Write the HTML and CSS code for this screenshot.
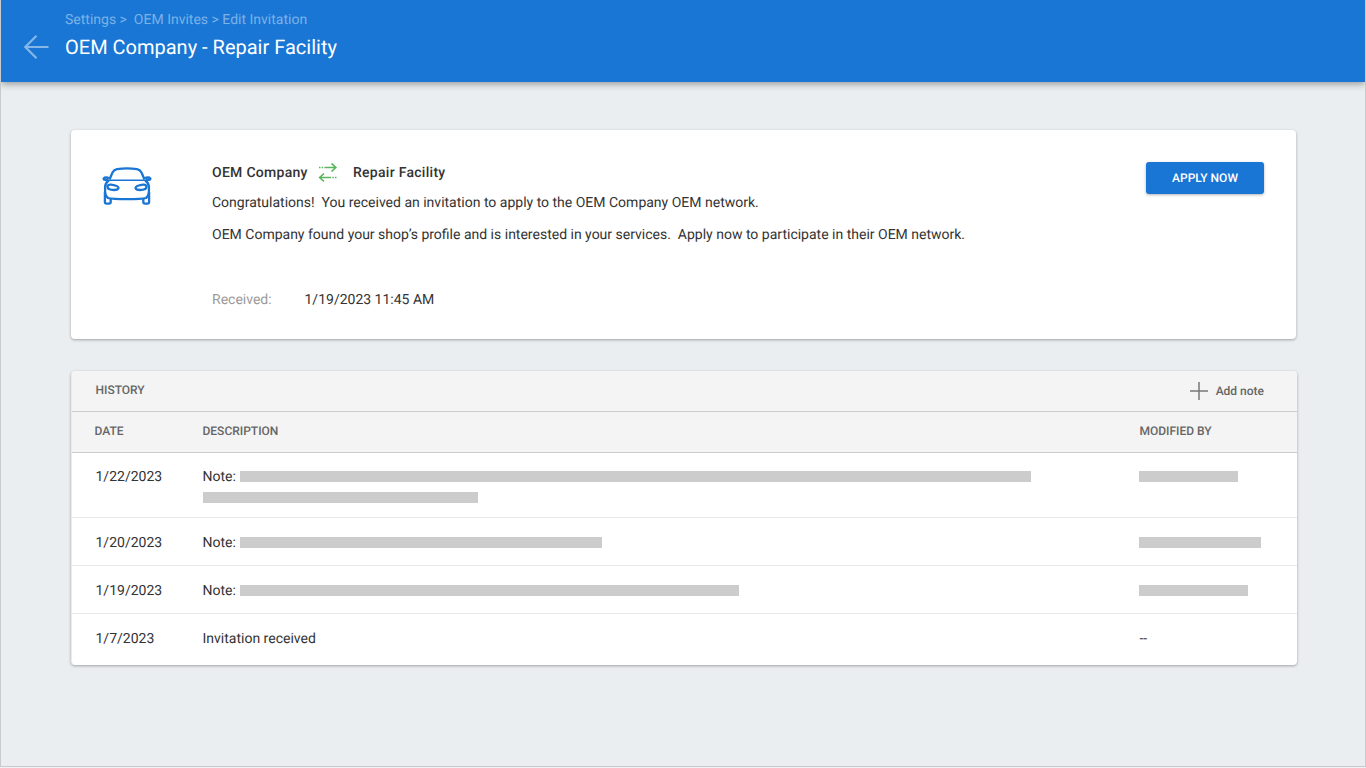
FILE: index.html
```
<!DOCTYPE html>
<html lang="en">
<head>
<meta charset="utf-8">
<title>Edit Invitation</title>
<link rel="stylesheet" href="styles.css">
</head>
<body>
<div class="page">
  <header class="topbar">
    <svg class="back" width="26" height="26" viewBox="0 0 26 26"><path d="M25.500 13H2.500M13.500 1.800L2.300 13L13.500 24.200"/></svg>
    <div class="titles">
      <nav class="crumbs">Settings &gt;&nbsp; OEM Invites &gt; Edit Invitation</nav>
      <h1 class="title">OEM Company - Repair Facility</h1>
    </div>
  </header>
  <main class="content">
    <section class="card invite">
      <svg class="car" width="50" height="40" viewBox="0 0 50 40">
        <path d="M7.500 13.500L10.500 6.500Q12 3.600 15 3.100Q25 1.700 35 3.100Q38 3.600 39.500 6.500L42.500 13.500"/>
        <path class="thin" d="M7 14.300H43"/>
        <path d="M7 14Q3.300 17 3.100 21V26Q3.300 30 6 32Q10 33.200 25 33.200T44 32Q46.700 30 46.900 26V21Q46.700 17 43 14"/>
        <path d="M7 12.300Q5 10.800 2.500 11.700Q1 12.500 2 13.600L6 14M43 12.300Q45 10.800 47.500 11.700Q49 12.500 48 13.600L44 14"/>
        <path d="M2.900 26V36Q2.900 37.600 4.500 37.600H7Q8.700 37.600 8.700 36V33M47.100 26V36Q47.100 37.600 45.500 37.600H43Q41.300 37.600 41.300 36V33"/>
        <path d="M5.500 20.500Q6 18.300 9 18.600Q16.500 19.500 16.500 22Q16 24 12 24Q5.500 24 5.500 20.500ZM44.500 20.500Q44 18.300 41 18.600Q33.500 19.500 33.500 22Q34 24 38 24Q44.500 24 44.500 20.500Z"/>
      </svg>
      <div class="info">
        <div class="parties">
          <span>OEM Company</span>
          <svg class="swap" width="20" height="20" viewBox="0 0 20 20">
            <path d="M6.500 4.500H17.500M13.500 .5L17.800 4.500L13.500 8.500M13 14.500H2M6 10.500L1.700 14.500L6 18.500"/>
            <path d="M1 4.500H2.500M3.700 4.500H5.200M14.300 14.500H15.800M17 14.500H18.500"/>
          </svg>
          <span>Repair Facility</span>
        </div>
        <p class="line first">Congratulations!&nbsp; You received an invitation to apply to the OEM Company OEM network.</p>
        <p class="line second">OEM Company found your shop’s profile and is interested in your services.&nbsp; Apply now to participate in their OEM network.</p>
        <div class="received"><span class="label">Received:</span><span>1/19/2023 11:45 AM</span></div>
      </div>
      <button class="apply">APPLY NOW</button>
    </section>
    <section class="card history">
      <div class="bar">
        <h2 class="heading">HISTORY</h2>
        <button class="add"><svg width="18" height="18" viewBox="0 0 18 18"><path d="M9 0V18M0 9H18"/></svg><span>Add note</span></button>
      </div>
      <div class="row columns"><span class="date">DATE</span><span>DESCRIPTION</span><span class="by">MODIFIED BY</span></div>
      <div class="row tall">
        <span class="date">1/22/2023</span>
        <div><div class="note"><span>Note:</span><i class="mask w791"></i></div><div class="note"><i class="mask w275"></i></div></div>
        <i class="mask w99"></i>
      </div>
      <div class="row"><span class="date">1/20/2023</span><div class="note"><span>Note:</span><i class="mask w362"></i></div><i class="mask w122"></i></div>
      <div class="row"><span class="date">1/19/2023</span><div class="note"><span>Note:</span><i class="mask w499"></i></div><i class="mask w109"></i></div>
      <div class="row last"><span class="date">1/7/2023</span><span>Invitation received</span><span class="by">--</span></div>
    </section>
  </main>
</div>
</body>
</html>
```
FILE: styles.css
```
* { box-sizing: border-box; }
body { margin: 0; background: #f0f1f2; font-family: Roboto, "Liberation Sans", sans-serif; color: #333; overflow: hidden; text-rendering: geometricPrecision; }
h1, h2, p { margin: 0; }
button { font-family: inherit; text-rendering: inherit; padding: 0; border: 0; }
svg { fill: none; flex: none; }
.page { height: 767px; background: #eaeef1; border: 1px solid #c8cacc; border-top: 0; }
.topbar { display: flex; height: 82px; background: #1976d4; padding: 11px 0 0 22px; box-shadow: 0 2px 7px rgba(0,0,0,.36); clip-path: inset(0 0 -20px 0); }
.back { margin-top: 23px; stroke: #85b7e9; stroke-width: 2.200; }
.titles { padding-left: 16px; }
.crumbs { font-size: 14px; line-height: 19px; color: #7cb2e8; white-space: pre; }
.title { font-size: 20px; line-height: 26px; margin-top: 4px; font-weight: 400; color: #fff; }
.content { padding: 48px 69px 0 70px; }
.card { border-radius: 4px; background: #fff; box-shadow: 0 1px 3px rgba(0,0,0,.32); }
.invite { display: flex; height: 209px; width: 1225px; }
.car { margin: 36px 0 0 31px; stroke: #1976d4; stroke-width: 2.300; }
.car .thin { stroke-width: 1.500; }
.info { padding: 33px 0 0 60px; flex: 1; font-size: 14px; line-height: 20px; }
.parties { display: flex; font-weight: 500; letter-spacing: .28px; }
.parties span:first-child { width: 96px; white-space: nowrap; }
.swap { margin: 0 15px 0 10px; stroke: #5cb660; stroke-width: 1.700; }
.line { white-space: nowrap; }
.first { margin-top: 10px; }
.second { margin-top: 12px; }
.received { display: flex; margin-top: 45px; }
.label { width: 92.500px; color: #9b9b9b; }
.apply { width: 118px; height: 32px; margin: 32px 32px 0 0; border-radius: 3px; background: #1976d4; color: #fff; font-size: 12px; font-weight: 500; box-shadow: 0 1px 3px rgba(0,0,0,.3); }
.history { margin-top: 32px; height: 294px; width: 1226px; overflow: hidden; background: #fff; border-left: 1px solid #e9ebed; }
.bar { display: flex; justify-content: space-between; height: 41px; background: #f4f4f4; border-bottom: 1px solid #ccc; padding: 0 33px 0 23.500px; color: #666; }
.heading { font-size: 12px; font-weight: 500; line-height: 38px; }
.add { display: flex; align-items: center; gap: 8px; background: none; color: #666; font-size: 12px; font-weight: 500; height: 40px; }
.add svg { stroke: #777; stroke-width: 1.500; }
.row { display: grid; grid-template-columns: 107px 936.500px 1fr; padding: 15px 0 0 23.500px; height: 48px; border-bottom: 1px solid #e8eaeb; font-size: 14px; line-height: 21px; }
.columns { height: 41px; padding-top: 9px; background: #f4f4f4; border-color: #ccc; color: #666; font-size: 12px; font-weight: 500; }
.columns .date { margin-left: -1px; }
.by { padding-left: .5px; }
.tall { height: 65px; padding-top: 14px; }
.last { border: 0; height: 52px; }
.note { display: flex; height: 21px; }
.note span { width: 37.500px; }
.mask { display: block; height: 11px; margin-top: 4px; background: #ccc; }
.w791 { width: 791px; }
.w275 { width: 275px; }
.w362 { width: 362px; }
.w499 { width: 499px; }
.w99 { width: 99px; }
.w122 { width: 122px; }
.w109 { width: 109px; }
```
